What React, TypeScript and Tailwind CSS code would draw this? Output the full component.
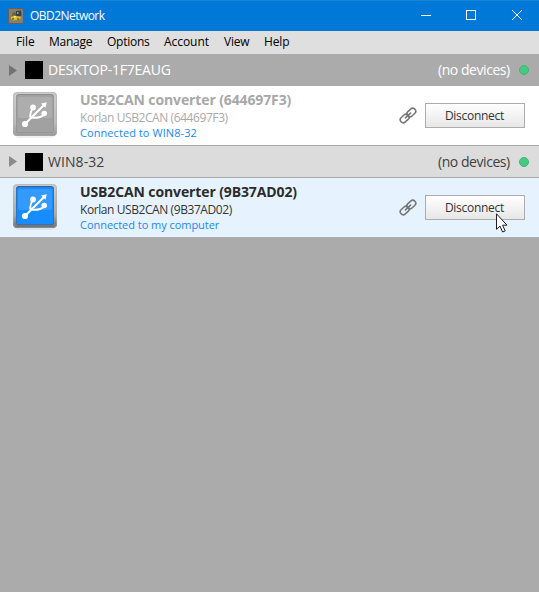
import React from "react";

function AppIcon() {
  return (
    <svg width="16" height="16" viewBox="0 0 16 16" className="mr-1.5 shrink-0">
      <rect width="16" height="16" rx="1.5" fill="#665f58" />
      <rect x="1" y="1" width="14" height="14" rx="1" fill="#857e75" />
      <path d="M4 6l2-2 3 1v4l-3 1-2-1z" fill="#6b6338" />
      <path d="M8 3l5-.5.5 5L10 9 8 7z" fill="#35404a" />
      <path d="M9 4h1.500v2H9z" fill="#8aa7a0" />
      <path d="M3 9l3-1.500 2 .5 4 .5 1 1.500-3 2H8l-3 .5-2-1.500z" fill="#d8bd22" />
      <path d="M4 10.500h2v1H4zM9 10.500h2v1H9z" fill="#423a20" />
      <path d="M6 8h2v1.500H6z" fill="#fff07a" />
    </svg>
  );
}

function TitleBar() {
  return (
    <div className="flex h-[31px] items-center border-t border-[#1a84da] bg-[#0078d7] pl-2 text-white">
      <AppIcon />
      <span className="text-[12px] leading-4 tracking-[-0.54px]">OBD2Network</span>
      <svg width="136" height="30" viewBox="0 0 136 30" className="ml-auto" fill="none" stroke="white" shapeRendering="crispEdges">
        <path d="M18 14.500h10M63.500 9.500h9v9h-9z" />
        <path d="M109 9l10 10M119 9l-10 10" shapeRendering="auto" />
      </svg>
    </div>
  );
}

function MenuBar() {
  return (
    <div className="flex h-[23px] items-center gap-[15px] bg-[#dfdfdf] pb-px pl-4 text-[12px] leading-4 whitespace-nowrap text-black">
      <span className="w-[18px] tracking-[-0.1px]">File</span>
      <span className="w-[43px] tracking-[-0.25px]">Manage</span>
      <span className="w-[42px] tracking-[-0.25px]">Options</span>
      <span className="w-[45px] tracking-[-0.05px]">Account</span>
      <span className="w-[25px] tracking-[-0.2px]">View</span>
      <span className="w-[25px] tracking-[-0.15px]">Help</span>
    </div>
  );
}

function HostHeader({ name, active }: { name: string; active?: boolean }) {
  return (
    <div className={"flex items-center pr-[10px] pl-[9px] text-[14px] whitespace-nowrap " + (active ? "h-[33px] border-y border-[#aaaaaa] bg-[#dcdcdc] text-[#404040]" : "h-8 bg-[#ababab] text-white")}>
      <svg width="8" height="11" viewBox="0 0 8 11" className="mr-2">
        <path d="M0 0l8 5.500L0 11z" fill={active ? "#8b8b8b" : "#737373"} />
      </svg>
      <div className="mr-[5px] size-[18px] bg-black" />
      <span className={"leading-5 " + (active ? "tracking-[0.08px]" : "tracking-[-0.22px]")}>{name}</span>
      <span className="ml-auto w-[72px] leading-5 tracking-[-0.45px]">(no devices)</span>
      <div className="ml-[9px] size-[10px] rounded-full border border-[#4baf78] bg-[#41cc82]" />
    </div>
  );
}

function UsbIcon({ active }: { active?: boolean }) {
  const id = active ? "usb-active" : "usb-idle";
  return (
    <svg width="48" height="50" viewBox="0 0 48 50" className="mt-1 shrink-0">
      <defs>
        <linearGradient id={id} x1="0" y1="0" x2="0" y2="1">
          <stop offset="0" stopColor="#cdcdcd" />
          <stop offset=".7" stopColor={active ? "#aaaaaa" : "#bcbcbc"} />
          <stop offset="1" stopColor={active ? "#6a6a6a" : "#999999"} />
        </linearGradient>
      </defs>
      <rect x="3" y="6" width="42" height="42" rx="5" fill="#000" opacity=".06" />
      <rect x="2" y="2" width="44" height="44" rx="4" fill={"url(#" + id + ")"} />
      <rect x="2.500" y="2.500" width="43" height="43" rx="4" fill="none" stroke="#aaa" strokeOpacity=".5" />
      <rect x="5" y="4" width="38" height="39" rx="3" fill={active ? "#3a5f86" : "#8d8d8d"} />
      <rect x="5.500" y="5" width="37" height="37.500" rx="2.500" fill={active ? "#168cff" : "#a1a1a1"} />
      <path d="M7 9q0-2 2-2h30q2 0 2 2v17q0 2-2 2H9q-2 0-2-2z" fill="white" opacity=".13" />
      <g fill="none" stroke="white" strokeWidth="1.900">
        <path d="M14 34L33 15" />
        <path d="M22 18q-3 4-2.700 9.500M20.500 27.500q5 .8 8.500-.5 3.500-1 4.500-4" />
      </g>
      <g fill="white">
        <circle cx="14" cy="34" r="3.100" />
        <circle cx="22" cy="17.500" r="2.900" />
        <path d="M35.700 12.200l-1.200 5.500-4.400-4.200z" />
        <circle cx="33.200" cy="23.500" r="2.800" />
      </g>
    </svg>
  );
}

function LinkIcon() {
  return (
    <svg width="18" height="18" viewBox="0 0 18 18" className="mr-2 shrink-0" fill="none">
      <g transform="translate(0 -.5) rotate(-42 9 9)" stroke="#777" strokeWidth="1.600">
        <rect x="-.3" y="6" width="9.700" height="6" rx="3" />
        <rect x="8.600" y="6" width="9.700" height="6" rx="3" />
        <path d="M5.500 9h7" strokeWidth="1.600" strokeLinecap="round" />
      </g>
    </svg>
  );
}

function Cursor() {
  return (
    <svg width="13" height="20" viewBox="0 0 13 20" className="absolute top-[17px] left-[69px]">
      <path d="M1.500.8v15.500l3.500-3.200 2.600 5.900 2.600-1.100-2.600-5.700h4.400z" fill="white" stroke="#1d1d2b" />
    </svg>
  );
}

type DeviceProps = { title: string; model: string; status: string; active?: boolean };

function DeviceRow({ title, model, status, active }: DeviceProps) {
  return (
    <div className={"flex h-[59px] items-start pr-[14px] pl-[11px] " + (active ? "bg-[#e6f3ff]" : "bg-white")}>
      <UsbIcon active={active} />
      <div className="ml-[21px] flex flex-col pt-[5px] whitespace-nowrap">
        <span className={"text-[14px] leading-[18px] font-bold tracking-[-0.12px] " + (active ? "text-[#2c2c2c]" : "text-[#a8a8a8]")}>{title}</span>
        <span className={"text-[12px] leading-[17px] tracking-[-0.42px] " + (active ? "text-[#333]" : "text-[#aaa]")}>{model}</span>
        <span className={"text-[11px] leading-[14px] text-[#1688f5] " + (active ? "tracking-[-0.04px]" : "tracking-[0.07px]")}>{status}</span>
      </div>
      <div className="ml-auto flex h-full items-center">
        <LinkIcon />
        <button className="relative h-[25px] w-[100px] border border-[#acacac] bg-linear-to-b from-white to-[#e7e7e7] pr-px text-[12px] tracking-[-0.28px] text-[#333]">
          Disconnect
          {active && <Cursor />}
        </button>
      </div>
    </div>
  );
}

export default function App() {
  return (
    <div className="flex h-[592px] w-[539px] flex-col overflow-hidden bg-[#ababab] font-['Open_Sans','Noto_Sans',sans-serif]">
      <TitleBar />
      <MenuBar />
      <HostHeader name="DESKTOP-1F7EAUG" />
      <DeviceRow title="USB2CAN converter (644697F3)" model="Korlan USB2CAN (644697F3)" status="Connected to WIN8-32" />
      <HostHeader name="WIN8-32" active />
      <DeviceRow title="USB2CAN converter (9B37AD02)" model="Korlan USB2CAN (9B37AD02)" status="Connected to my computer" active />
    </div>
  );
}
